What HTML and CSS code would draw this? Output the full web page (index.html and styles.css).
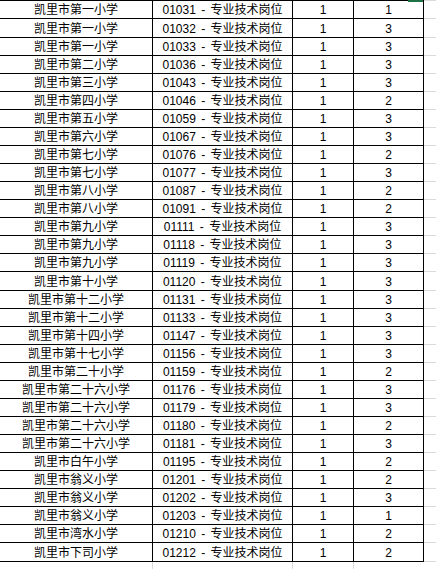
FILE: index.html
```html
<!DOCTYPE html>
<html lang="zh">
<head>
<meta charset="utf-8">
<link rel="stylesheet" href="styles.css">
</head>
<body>
<div class="sheet">
  <div class="sel-mark"></div>
  <div class="row tall"><div class="c">凯里市第一小学</div><div class="c post">01031 - 专业技术岗位</div><div class="c">1</div><div class="c">1</div><div class="g"></div></div>
  <div class="row tall"><div class="c">凯里市第一小学</div><div class="c post">01032 - 专业技术岗位</div><div class="c">1</div><div class="c">3</div><div class="g"></div></div>
  <div class="row"><div class="c">凯里市第一小学</div><div class="c post">01033 - 专业技术岗位</div><div class="c">1</div><div class="c">3</div><div class="g"></div></div>
  <div class="row"><div class="c">凯里市第二小学</div><div class="c post">01036 - 专业技术岗位</div><div class="c">1</div><div class="c">3</div><div class="g"></div></div>
  <div class="row"><div class="c">凯里市第三小学</div><div class="c post">01043 - 专业技术岗位</div><div class="c">1</div><div class="c">3</div><div class="g"></div></div>
  <div class="row"><div class="c">凯里市第四小学</div><div class="c post">01046 - 专业技术岗位</div><div class="c">1</div><div class="c">2</div><div class="g"></div></div>
  <div class="row"><div class="c">凯里市第五小学</div><div class="c post">01059 - 专业技术岗位</div><div class="c">1</div><div class="c">3</div><div class="g"></div></div>
  <div class="row"><div class="c">凯里市第六小学</div><div class="c post">01067 - 专业技术岗位</div><div class="c">1</div><div class="c">3</div><div class="g"></div></div>
  <div class="row"><div class="c">凯里市第七小学</div><div class="c post">01076 - 专业技术岗位</div><div class="c">1</div><div class="c">2</div><div class="g"></div></div>
  <div class="row"><div class="c">凯里市第七小学</div><div class="c post">01077 - 专业技术岗位</div><div class="c">1</div><div class="c">3</div><div class="g"></div></div>
  <div class="row"><div class="c">凯里市第八小学</div><div class="c post">01087 - 专业技术岗位</div><div class="c">1</div><div class="c">2</div><div class="g"></div></div>
  <div class="row"><div class="c">凯里市第八小学</div><div class="c post">01091 - 专业技术岗位</div><div class="c">1</div><div class="c">2</div><div class="g"></div></div>
  <div class="row"><div class="c">凯里市第九小学</div><div class="c post">01111 - 专业技术岗位</div><div class="c">1</div><div class="c">3</div><div class="g"></div></div>
  <div class="row"><div class="c">凯里市第九小学</div><div class="c post">01118 - 专业技术岗位</div><div class="c">1</div><div class="c">3</div><div class="g"></div></div>
  <div class="row"><div class="c">凯里市第九小学</div><div class="c post">01119 - 专业技术岗位</div><div class="c">1</div><div class="c">3</div><div class="g"></div></div>
  <div class="row tall"><div class="c">凯里市第十小学</div><div class="c post">01120 - 专业技术岗位</div><div class="c">1</div><div class="c">3</div><div class="g"></div></div>
  <div class="row"><div class="c">凯里市第十二小学</div><div class="c post">01131 - 专业技术岗位</div><div class="c">1</div><div class="c">3</div><div class="g"></div></div>
  <div class="row"><div class="c">凯里市第十二小学</div><div class="c post">01133 - 专业技术岗位</div><div class="c">1</div><div class="c">3</div><div class="g"></div></div>
  <div class="row"><div class="c">凯里市第十四小学</div><div class="c post">01147 - 专业技术岗位</div><div class="c">1</div><div class="c">3</div><div class="g"></div></div>
  <div class="row"><div class="c">凯里市第十七小学</div><div class="c post">01156 - 专业技术岗位</div><div class="c">1</div><div class="c">3</div><div class="g"></div></div>
  <div class="row"><div class="c">凯里市第二十小学</div><div class="c post">01159 - 专业技术岗位</div><div class="c">1</div><div class="c">2</div><div class="g"></div></div>
  <div class="row"><div class="c">凯里市第二十六小学</div><div class="c post">01176 - 专业技术岗位</div><div class="c">1</div><div class="c">3</div><div class="g"></div></div>
  <div class="row"><div class="c">凯里市第二十六小学</div><div class="c post">01179 - 专业技术岗位</div><div class="c">1</div><div class="c">3</div><div class="g"></div></div>
  <div class="row"><div class="c">凯里市第二十六小学</div><div class="c post">01180 - 专业技术岗位</div><div class="c">1</div><div class="c">2</div><div class="g"></div></div>
  <div class="row"><div class="c">凯里市第二十六小学</div><div class="c post">01181 - 专业技术岗位</div><div class="c">1</div><div class="c">3</div><div class="g"></div></div>
  <div class="row"><div class="c">凯里市白午小学</div><div class="c post">01195 - 专业技术岗位</div><div class="c">1</div><div class="c">2</div><div class="g"></div></div>
  <div class="row"><div class="c">凯里市翁义小学</div><div class="c post">01201 - 专业技术岗位</div><div class="c">1</div><div class="c">2</div><div class="g"></div></div>
  <div class="row"><div class="c">凯里市翁义小学</div><div class="c post">01202 - 专业技术岗位</div><div class="c">1</div><div class="c">3</div><div class="g"></div></div>
  <div class="row"><div class="c">凯里市翁义小学</div><div class="c post">01203 - 专业技术岗位</div><div class="c">1</div><div class="c">1</div><div class="g"></div></div>
  <div class="row"><div class="c">凯里市湾水小学</div><div class="c post">01210 - 专业技术岗位</div><div class="c">1</div><div class="c">2</div><div class="g"></div></div>
  <div class="row tall"><div class="c">凯里市下司小学</div><div class="c post">01212 - 专业技术岗位</div><div class="c">1</div><div class="c">2</div><div class="g"></div></div>
  <div class="row filler"><div class="f"></div><div class="f"></div><div class="f"></div><div class="f last"></div><div class="g"></div></div>
</div>
</body>
</html>
```
FILE: styles.css
```css
* { box-sizing: border-box; }
html, body {
  margin: 0;
  padding: 0;
  background: #ffffff;
  overflow: hidden;
}
.sheet {
  position: relative;
  width: 436px;
  font-family: "Liberation Sans", "Noto Sans CJK SC", sans-serif;
  font-size: 12px;
  color: #000000;
}
.sel-mark {
  position: absolute;
  left: 408px;
  top: 0;
  width: 15px;
  height: 2px;
  background: #1e7145;
}
.row {
  display: grid;
  grid-template-columns: 153px 140px 61px 70px 12px;
  height: 18px;
}
.row.tall { height: 19px; }
.c {
  display: flex;
  align-items: center;
  justify-content: center;
  white-space: nowrap;
  border-right: 1px solid #000000;
  border-bottom: 1px solid #000000;
  line-height: 1;
  padding-top: 1px;
}
.c.post { word-spacing: 2px; }
.sheet > .row:nth-child(2) .c { border-top: 1px solid #000000; }
.sheet > .row:nth-child(2) .g { border-top: 1px solid #dadada; }
.g {
  border-bottom: 1px solid #dadada;
}
.row.filler { height: 8px; }
.f { border-right: 1px solid #dadada; }
.f.last { border-right: none; }
```
